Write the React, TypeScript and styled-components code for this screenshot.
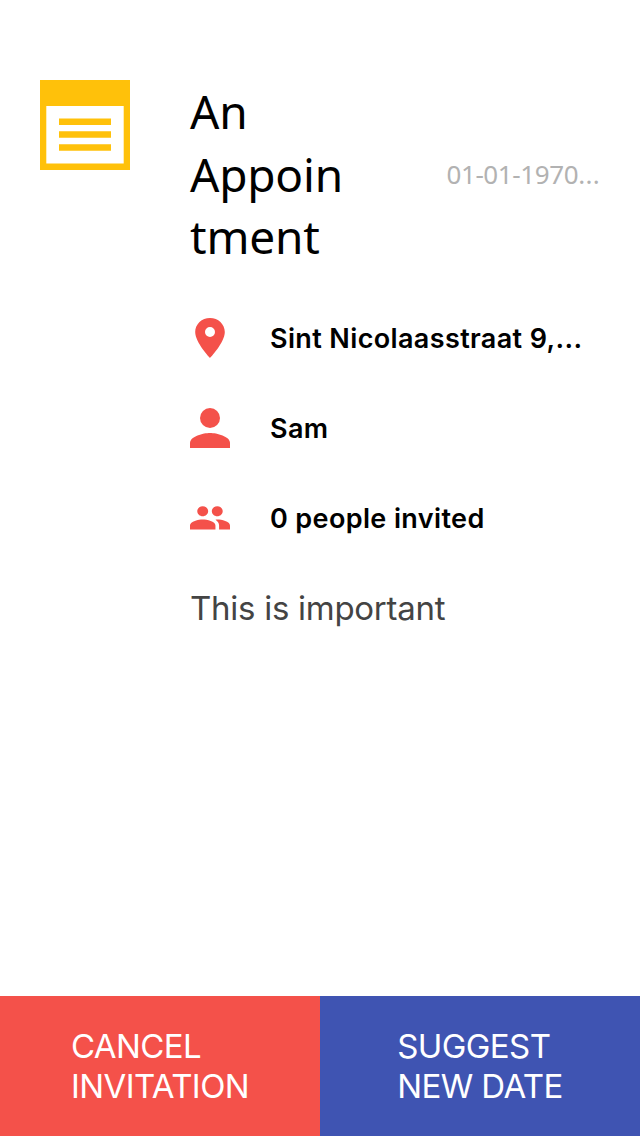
import React from 'react';
import styled, { createGlobalStyle } from 'styled-components';

const Global = createGlobalStyle`
  * { box-sizing: border-box; }
  body { margin: 0; background: #fff; font-family: Inter, "Liberation Sans", sans-serif; color: #000; }
`;
const Screen = styled.main`
  display: flex; flex-direction: column; width: 640px; height: 1136px; overflow: hidden;
`;
const Content = styled.section`
  flex: 1; display: grid; grid-template-columns: 90px 410px; column-gap: 60px; padding: 80px 0 0 40px; align-content: start;
`;
const Header = styled.header`
  display: flex; justify-content: space-between; align-items: center; height: 188px;
`;
const Title = styled.h1`
  margin: 0; font: 400 46px/62.7px "Noto Sans", sans-serif; letter-spacing: -0.2px; white-space: nowrap;
`;
const DateLabel = styled.time`
  font: 400 26px/34px "Noto Sans", sans-serif; letter-spacing: -0.4px; color: #b2b2b2; white-space: nowrap;
`;
const Ellipsis = styled.span`
  letter-spacing: 0.3px;
`;
const Details = styled.ul`
  list-style: none; margin: 50px 0 0; padding: 0; display: flex; flex-direction: column; gap: 50px;
`;
const Detail = styled.li`
  display: flex; align-items: center; gap: 40px; height: 40px; font-size: 27px; line-height: 34px; font-weight: 600;
  letter-spacing: 0.37px; white-space: nowrap;
`;
const DetailText = styled.span`
  padding-top: 2px;
`;
const DetailIcon = styled.svg`
  width: 40px; height: 40px; flex: none; fill: #f4514a;
`;
const Note = styled.p`
  margin: 50px 0 0; font-size: 33px; line-height: 40px; letter-spacing: -0.27px; color: #444; white-space: nowrap;
`;
const Actions = styled.footer`
  display: grid; grid-template-columns: 1fr 1fr; height: 140px;
`;
const Action = styled.button<{ $color: string }>`
  display: flex; align-items: center; justify-content: center; border: 0; padding: 0; background: ${p => p.$color};
  color: #fff; font: 400 33px/40px Inter, sans-serif; letter-spacing: -0.6px; text-align: left;
`;

export default function App() {
  return (
    <Screen>
      <Global />
      <Content>
        <svg width="90" height="90" viewBox="0 0 90 90">
          <path fill="#ffc10a" fillRule="evenodd" d="M0 0H90V90H0ZM6.3 26V83.5H83.7V26Z" />
          <path fill="#ffc10a" d="M19 38.5h52v6.5H19zM19 51.3h52v6.5H19zM19 64.3h52v6.5H19z" />
        </svg>
        <div>
          <Header>
            <Title>An<br />Appoin<br />tment</Title>
            <DateLabel>01-01-1970<Ellipsis>...</Ellipsis></DateLabel>
          </Header>
          <Details>
            <Detail>
              <DetailIcon viewBox="0 0 40 40"><path fillRule="evenodd" d="M20 0C11.8 0 5.2 6.2 5.2 14C5.2 24.5 20 40 20 40S34.8 24.5 34.8 14C34.8 6.2 28.2 0 20 0ZM20 19A5 5 0 1 1 20 9A5 5 0 0 1 20 19Z" /></DetailIcon>
              <DetailText>Sint Nicolaasstraat 9,...</DetailText>
            </Detail>
            <Detail>
              <DetailIcon viewBox="0 0 40 40"><circle cx="20" cy="10" r="10" /><path d="M0 40v-5c0-6.7 13.3-10 20-10s20 3.3 20 10v5z" /></DetailIcon>
              <DetailText>Sam</DetailText>
            </Detail>
            <Detail>
              <DetailIcon viewBox="0 0 40 40"><path transform="translate(-1.82 -.15) scale(1.818 1.67)" d="M16 11c1.66 0 2.99-1.34 2.99-3S17.66 5 16 5s-3 1.34-3 3 1.34 3 3 3zm-8 0c1.66 0 2.99-1.34 2.99-3S9.66 5 8 5 5 6.34 5 8s1.34 3 3 3zm0 2c-2.33 0-7 1.17-7 3.5V19h14v-2.5c0-2.33-4.67-3.5-7-3.5zm8 0c-.29 0-.62.02-.97.05 1.16.84 1.97 1.97 1.97 3.45V19h6v-2.5c0-2.33-4.67-3.5-7-3.5z" /></DetailIcon>
              <DetailText>0 people invited</DetailText>
            </Detail>
          </Details>
          <Note>This is important</Note>
        </div>
      </Content>
      <Actions>
        <Action $color="#f4514a">CANCEL<br />INVITATION</Action>
        <Action $color="#3f54b2">SUGGEST<br />NEW DATE</Action>
      </Actions>
    </Screen>
  );
}
